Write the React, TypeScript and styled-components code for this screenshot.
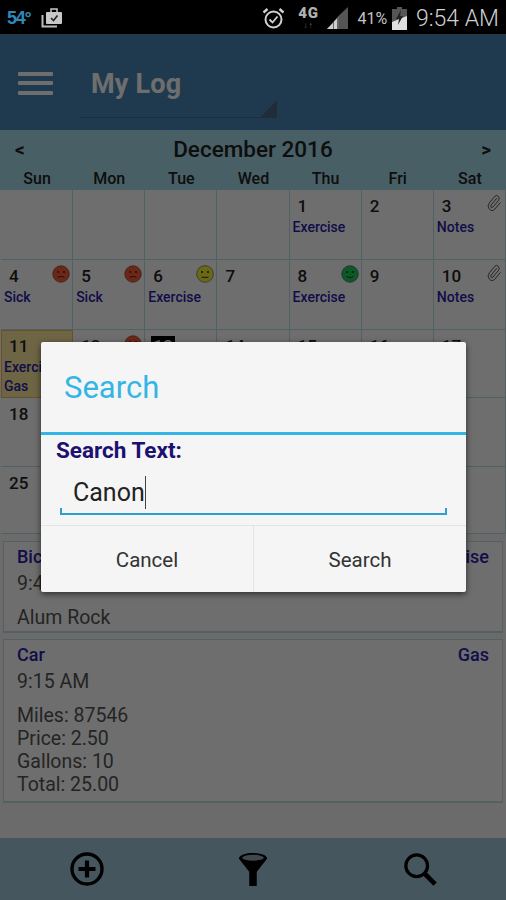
import React from "react";
import styled, { createGlobalStyle } from "styled-components";
import { Paperclip } from "lucide-react";

const Global = createGlobalStyle`
  html, body { margin: 0; padding: 0; background: #000; }
  body { font-family: Roboto, "Liberation Sans", sans-serif; }
`;

type Mood = "sad" | "meh" | "happy";

interface Day {
  day?: number;
  labels?: string[];
  mood?: Mood;
  clip?: boolean;
  selected?: boolean;
  today?: boolean;
}

// cells under the dialog stay empty, the dialog covers them anyway
const days: Day[] = [
  {}, {}, {}, {},
  { day: 1, labels: ["Exercise"] },
  { day: 2 },
  { day: 3, labels: ["Notes"], clip: true },
  { day: 4, labels: ["Sick"], mood: "sad" },
  { day: 5, labels: ["Sick"], mood: "sad" },
  { day: 6, labels: ["Exercise"], mood: "meh" },
  { day: 7 },
  { day: 8, labels: ["Exercise"], mood: "happy" },
  { day: 9 },
  { day: 10, labels: ["Notes"], clip: true },
  { day: 11, labels: ["Exercise", "Gas"], selected: true },
  { day: 12, mood: "sad" },
  { day: 13, today: true },
  { day: 14 }, { day: 15 }, { day: 16 }, { day: 17 },
  { day: 18 }, {}, {}, {}, {}, {}, {},
  { day: 25 }, {}, {}, {}, {}, {}, {},
];

const weekdays = ["Sun", "Mon", "Tue", "Wed", "Thu", "Fri", "Sat"];

const moodColors: Record<Mood, string> = {
  sad: "#ff5c34",
  meh: "#f8f42c",
  happy: "#1ccc60",
};

const Phone = styled.div`
  width: 506px;
  height: 900px;
  display: flex;
  flex-direction: column;
  overflow: hidden;
  background: #000;
`;

const StatusBar = styled.div`
  height: 34px;
  flex: none;
  box-sizing: border-box;
  display: flex;
  align-items: center;
  padding: 2px 7px 0;
  background: #000;
  color: #c8c8c8;
`;

const Temp = styled.span`
  font-family: "Liberation Sans", sans-serif;
  font-size: 18px;
  font-weight: 700;
  letter-spacing: -1.2px;
  color: #2f8ab8;
  width: 34px;
`;

const StatusRight = styled.div`
  margin-left: auto;
  display: flex;
  align-items: center;
`;

const NetText = styled.div`
  width: 28px;
  margin-left: 10px;
  font-size: 15px;
  line-height: 15px;
  font-weight: 900;
  color: #b0b0b0;
  letter-spacing: 1px;
  height: 24px;
  text-align: center;
`;

const NetArrows = styled.div`
  font-size: 8px;
  line-height: 9px;
  color: #666;
`;

const Percent = styled.span`
  font-size: 16px;
  margin-left: 9px;
  letter-spacing: -0.1px;
  color: #c4c4c4;
`;

const Clock = styled.span`
  font-size: 23px;
  font-weight: 300;
  margin-left: 9px;
  color: #d0d0d0;
`;

const Screen = styled.div`
  position: relative;
  flex: 1;
  display: flex;
  flex-direction: column;
  background: #fff;
`;

const AppBar = styled.header`
  height: 96px;
  flex: none;
  display: flex;
  align-items: center;
  padding: 0 0 0 18px;
  box-sizing: border-box;
  background: #4886b6;
`;

const Burger = styled.div`
  width: 35px;
  height: 23px;
  margin-top: 2px;
  display: flex;
  flex-direction: column;
  justify-content: space-between;
`;

const BurgerLine = styled.span`
  height: 4px;
  border-radius: 1px;
  background: #fff;
`;

const Spinner = styled.div`
  position: relative;
  width: 197px;
  height: 67px;
  margin-left: 27px;
  margin-top: 5px;
  box-sizing: border-box;
  border-bottom: 1px solid #3a6c90;
  display: flex;
  align-items: center;
  padding: 0 0 1px 11px;
`;

const SpinnerCorner = styled.span`
  position: absolute;
  right: 0;
  bottom: 0;
  width: 0;
  height: 0;
  border-left: 16px solid transparent;
  border-bottom: 17px solid #4a6680;
`;

const AppTitle = styled.h1`
  margin: 0;
  font-size: 27px;
  font-weight: 700;
  color: #fff;
  letter-spacing: 0.2px;
`;

const CalHead = styled.div`
  height: 60px;
  flex: none;
  background: #a8dcea;
  color: #222;
`;

const MonthRow = styled.div`
  height: 38px;
  display: flex;
  align-items: center;
  justify-content: space-between;
  padding: 0 15px 0 15px;
  box-sizing: border-box;
`;

const Arrow = styled.span`
  font-size: 19px;
  font-weight: 700;
`;

const Month = styled.span`
  font-size: 22.5px;
  font-weight: 500;
`;

const WeekRow = styled.div`
  display: grid;
  grid-template-columns: repeat(7, 1fr);
  padding-left: 1px;
`;

const WeekDay = styled.span`
  text-align: center;
  font-size: 16px;
  font-weight: 500;
  line-height: 22px;
`;

const Grid = styled.div`
  display: grid;
  grid-template-columns: repeat(7, 1fr);
  grid-template-rows: 70px 70px 68px 69px 67px;
  padding-left: 1px;
  flex: none;
`;

const Cell = styled.div<{ $selected?: boolean }>`
  position: relative;
  box-sizing: border-box;
  padding: 6px 0 0 3px;
  border-right: 1px solid #b4e0e6;
  border-bottom: 1px solid #b4e0e6;
  background: ${(p) => (p.$selected ? "#ffe9a0" : "#fff")};
  ${(p) => p.$selected && "outline: 1px solid #f0b860; outline-offset: -1px;"}
  overflow: hidden;
`;

const DayNum = styled.span<{ $today?: boolean }>`
  display: inline-block;
  margin-left: 3px;
  padding: 0 2px;
  font-size: 17px;
  line-height: 21px;
  font-weight: 500;
  color: ${(p) => (p.$today ? "#fff" : "#222")};
  background: ${(p) => (p.$today ? "#000" : "transparent")};
`;

const CellLabel = styled.div`
  font-size: 14px;
  line-height: 19px;
  font-weight: 500;
  color: #2a1ea8;
  white-space: nowrap;
`;

const LabelList = styled.div`
  margin-top: 1px;
`;

const FaceSpot = styled.span`
  position: absolute;
  top: 5px;
  right: 2px;
  display: flex;
`;

const ClipSpot = styled.span`
  position: absolute;
  top: 4px;
  right: 2px;
  display: flex;
  color: #444;
  transform: scaleX(0.85);
`;

const List = styled.div`
  flex: 1;
  display: flex;
  flex-direction: column;
  gap: 6px;
  padding: 7px 3px 0;
  background: #f8f8f8;
`;

const Card = styled.div<{ $h: number }>`
  height: ${(p) => p.$h}px;
  flex: none;
  box-sizing: border-box;
  padding: 3px 13px;
  background: #fff;
  border: 1px solid #c4e0e6;
  border-bottom-width: 2px;
`;

const CardTop = styled.div`
  display: flex;
  justify-content: space-between;
  font-size: 18px;
  line-height: 24px;
  font-weight: 500;
  color: #2a1ea8;
`;

const CardTime = styled.div`
  font-size: 19.5px;
  line-height: 30px;
  color: #555;
`;

const CardBody = styled.div`
  margin-top: 7px;
  font-size: 19.5px;
  line-height: 23px;
  color: #555;
`;

const BottomBar = styled.div`
  height: 62px;
  flex: none;
  display: grid;
  grid-template-columns: 173px 160px 173px;
  background: #a0c8da;
`;

const BarSlot = styled.div`
  display: flex;
  align-items: center;
  justify-content: center;
`;

const Dim = styled.div`
  position: absolute;
  inset: 0;
  background: rgba(0, 0, 0, 0.57);
`;

const Dialog = styled.div`
  position: absolute;
  left: 41px;
  top: 308px;
  width: 425px;
  height: 250px;
  display: flex;
  flex-direction: column;
  background: #f5f5f5;
  border-radius: 2px;
  box-shadow: 0 2px 6px rgba(0, 0, 0, 0.6);
`;

const DialogTitle = styled.div`
  height: 93px;
  flex: none;
  box-sizing: border-box;
  padding: 25px 0 0 23px;
  font-size: 31px;
  line-height: 42px;
  color: #33b5e5;
  border-bottom: 3px solid #33b5e5;
`;

const FieldLabel = styled.label`
  display: block;
  margin: 0 0 0 15px;
  font-size: 22.5px;
  line-height: 30px;
  font-weight: 700;
  color: #1c1070;
`;

const Field = styled.div`
  position: relative;
  height: 47px;
  margin: 3px 19px 0;
  box-sizing: border-box;
  padding-left: 13px;
  padding-top: 4px;
  display: flex;
  align-items: center;
  border-bottom: 2px solid #2f9fcf;
  font-size: 25px;
  color: #222;

  &::before,
  &::after {
    content: "";
    position: absolute;
    bottom: 0;
    width: 2px;
    height: 5px;
    background: #2f9fcf;
  }
  &::before { left: 0; }
  &::after { right: 0; }
`;

const Caret = styled.span`
  width: 1.5px;
  height: 33px;
  margin-left: 0;
  background: #444;
`;

const ButtonRow = styled.div`
  flex: 1;
  margin-top: 10px;
  display: grid;
  grid-template-columns: 212px 1fr;
  border-top: 1px solid #e4e4e4;
`;

const DialogButton = styled.button`
  border: 0;
  background: transparent;
  font-family: inherit;
  font-size: 20.5px;
  color: #333;
  padding: 2px 0 0;
  & + & { border-left: 1px solid #e4e4e4; }
`;

const Face = ({ mood }: { mood: Mood }) => (
  <svg width="18" height="18" viewBox="0 0 18 18">
    <circle cx="9" cy="9" r="8.3" fill={moodColors[mood]} stroke="#444" strokeWidth="0.6" />
    <circle cx="6" cy="7" r="1.1" fill="#333" />
    <circle cx="12" cy="7" r="1.1" fill="#333" />
    {mood === "sad" && <path d="M5.5 13c1-2 6-2 7 0" fill="none" stroke="#333" strokeWidth="1" />}
    {mood === "meh" && <path d="M5.5 12.3h7" fill="none" stroke="#333" strokeWidth="1" />}
    {mood === "happy" && <path d="M5.5 11c1 2 6 2 7 0" fill="none" stroke="#333" strokeWidth="1" />}
  </svg>
);

const BriefcaseIcon = () => (
  <svg width="22" height="22" viewBox="0 0 22 22" fill="none">
    <path d="M1.5 8v11.5H16" stroke="#bbb" strokeWidth="2" />
    <rect x="5" y="5" width="16" height="12" rx="1" fill="#c8c8c8" />
    <rect x="10" y="2" width="6" height="4" fill="none" stroke="#c8c8c8" strokeWidth="1.5" />
    <path d="M10 11l2.5 2.5 4-5" stroke="#222" strokeWidth="1.6" />
  </svg>
);

const AlarmIcon = () => (
  <svg width="23" height="23" viewBox="0 0 23 23" fill="none" stroke="#d0d0d0">
    <circle cx="11.5" cy="12.5" r="8" strokeWidth="2" />
    <path d="M7.5 12.5l3 3 5-6" strokeWidth="1.8" />
    <path d="M1.5 5.5 5.5 2M21.5 5.5 17.5 2" strokeWidth="2.4" />
  </svg>
);

const SignalIcon = () => (
  <svg width="23" height="24" viewBox="0 0 23 24" style={{ marginLeft: 3 }}>
    <path d="M22 1v22H13V9.5z" fill="#555" />
    <path d="M13 9.5V23H1z" fill="#666" />
    <path d="M7 17v6H1zM11 12.5V23H8v-7.5z" fill="#d0d0d0" />
  </svg>
);

const BatteryIcon = () => (
  <svg width="15" height="23" viewBox="0 0 15 23" style={{ marginLeft: 5 }}>
    <path d="M5 0h5v2h5v21H0V2h5z" fill="#555" />
    <path d="M0 15 15 9v14H0z" fill="#e0e0e0" />
    <path d="M9 3 4 12h3l-1 6 5-9H8z" fill="#222" />
  </svg>
);

const AddIcon = () => (
  <svg width="34" height="34" viewBox="0 0 34 34" fill="none" stroke="#000">
    <circle cx="17" cy="17" r="15" strokeWidth="3.4" />
    <path d="M17 8.5v17M8.5 17h17" strokeWidth="4.2" />
  </svg>
);

const FunnelIcon = () => (
  <svg width="30" height="34" viewBox="0 0 32 36">
    <path d="M1 7c0-8 30-8 30 0L20 21v15h-8V21z" fill="#000" />
    <ellipse cx="16" cy="6" rx="11.5" ry="3.2" fill="#8fa7b2" />
  </svg>
);

const SearchIcon = () => (
  <svg width="34" height="34" viewBox="0 0 36 36" fill="none" stroke="#000">
    <circle cx="14.5" cy="14.5" r="11.5" strokeWidth="3.4" />
    <path d="M23 23l11 11" strokeWidth="5" />
  </svg>
);

const DayCell = ({ d }: { d: Day }) => (
  <Cell $selected={d.selected}>
    {d.day && <DayNum $today={d.today}>{d.day}</DayNum>}
    {d.labels && (
      <LabelList>
        {d.labels.map((l) => (
          <CellLabel key={l}>{l}</CellLabel>
        ))}
      </LabelList>
    )}
    {d.mood && (
      <FaceSpot>
        <Face mood={d.mood} />
      </FaceSpot>
    )}
    {d.clip && (
      <ClipSpot>
        <Paperclip size={18} strokeWidth={1.3} />
      </ClipSpot>
    )}
  </Cell>
);

export default function App() {
  return (
    <Phone>
      <Global />
      <StatusBar>
        <Temp>54°</Temp>
        <BriefcaseIcon />
        <StatusRight>
          <AlarmIcon />
          <NetText>
            4G
            <NetArrows>↓↑</NetArrows>
          </NetText>
          <SignalIcon />
          <Percent>41%</Percent>
          <BatteryIcon />
          <Clock>9:54 AM</Clock>
        </StatusRight>
      </StatusBar>
      <Screen>
        <AppBar>
          <Burger>
            <BurgerLine />
            <BurgerLine />
            <BurgerLine />
          </Burger>
          <Spinner>
            <AppTitle>My Log</AppTitle>
            <SpinnerCorner />
          </Spinner>
        </AppBar>
        <CalHead>
          <MonthRow>
            <Arrow>&lt;</Arrow>
            <Month>December 2016</Month>
            <Arrow>&gt;</Arrow>
          </MonthRow>
          <WeekRow>
            {weekdays.map((w) => (
              <WeekDay key={w}>{w}</WeekDay>
            ))}
          </WeekRow>
        </CalHead>
        <Grid>
          {days.map((d, i) => (
            <DayCell key={i} d={d} />
          ))}
        </Grid>
        <List>
          <Card $h={92}>
            <CardTop>
              <span>Bicycle</span>
              <span>Exercise</span>
            </CardTop>
            <CardTime>9:45 AM</CardTime>
            <CardBody>Alum Rock</CardBody>
          </Card>
          <Card $h={164}>
            <CardTop>
              <span>Car</span>
              <span>Gas</span>
            </CardTop>
            <CardTime>9:15 AM</CardTime>
            <CardBody>
              Miles: 87546
              <br />
              Price: 2.50
              <br />
              Gallons: 10
              <br />
              Total: 25.00
            </CardBody>
          </Card>
        </List>
        <BottomBar>
          <BarSlot>
            <AddIcon />
          </BarSlot>
          <BarSlot>
            <FunnelIcon />
          </BarSlot>
          <BarSlot>
            <SearchIcon />
          </BarSlot>
        </BottomBar>
        <Dim />
        <Dialog>
          <DialogTitle>Search</DialogTitle>
          <FieldLabel>Search Text:</FieldLabel>
          <Field>
            Canon
            <Caret />
          </Field>
          <ButtonRow>
            <DialogButton>Cancel</DialogButton>
            <DialogButton>Search</DialogButton>
          </ButtonRow>
        </Dialog>
      </Screen>
    </Phone>
  );
}
